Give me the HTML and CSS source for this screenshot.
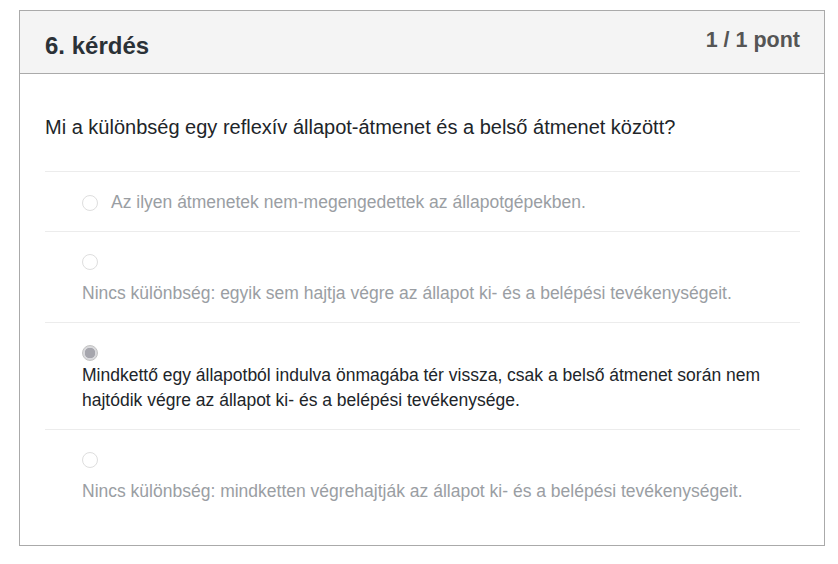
FILE: index.html
```html
<!DOCTYPE html>
<html lang="hu">
<head>
<meta charset="utf-8">
<link rel="stylesheet" href="styles.css">
</head>
<body>
<div class="card">
  <div class="card-header">
    <h2 class="title">6. kérdés</h2>
    <div class="points">1 / 1 pont</div>
  </div>
  <div class="card-body">
    <p class="question">Mi a különbség egy reflexív állapot-átmenet és a belső átmenet között?</p>
    <ul class="options">
      <li class="option inline">
        <span class="radio"></span>
        <span class="label">Az ilyen átmenetek nem-megengedettek az állapotgépekben.</span>
      </li>
      <li class="option">
        <span class="radio"></span>
        <div class="label">Nincs különbség: egyik sem hajtja végre az állapot ki- és a belépési tevékenységeit.</div>
      </li>
      <li class="option selected">
        <span class="radio checked"></span>
        <div class="label">Mindkettő egy állapotból indulva önmagába tér vissza, csak a belső átmenet során nem hajtódik végre az állapot ki- és a belépési tevékenysége.</div>
      </li>
      <li class="option">
        <span class="radio"></span>
        <div class="label">Nincs különbség: mindketten végrehajtják az állapot ki- és a belépési tevékenységeit.</div>
      </li>
    </ul>
  </div>
</div>
</body>
</html>
```

FILE: styles.css
```css
* { box-sizing: border-box; }
body {
  margin: 0;
  background: #fff;
  font-family: "Liberation Sans", Arial, sans-serif;
  color: #333;
}
.card {
  margin: 10px 0 0 19px;
  width: 806px;
  height: 536px;
  border: 1px solid #aaa;
}
.card-header {
  height: 63px;
  background: #f4f4f4;
  border-bottom: 1px solid #aaa;
  display: flex;
  justify-content: space-between;
  align-items: flex-start;
  padding: 0 24px 0 25px;
}
.title {
  margin: 21px 0 0;
  font-size: 24px;
  font-weight: bold;
  line-height: 28px;
  color: #2b3137;
}
.points {
  margin-top: 16px;
  font-size: 21.5px;
  font-weight: bold;
  line-height: 26px;
  color: #555;
}
.card-body {
  padding: 0 24px 0 25px;
}
.question {
  margin: 39px 0 30px;
  font-size: 20px;
  line-height: 28px;
  color: #212529;
}
.options {
  list-style: none;
  margin: 0;
  padding: 0;
}
.option {
  border-top: 1px solid #ececec;
  padding: 20px 0 16px 37px;
  font-size: 17.5px;
  line-height: 25px;
  color: #9a9ea3;
}
.option .radio {
  display: block;
  margin: 2px 0 11px;
}
.option.selected .radio {
  margin-bottom: 2px;
}
.option.selected {
  color: #212529;
}
.option.inline {
  display: flex;
  align-items: center;
  gap: 13px;
  padding-top: 18px;
}
.option.inline .radio {
  margin: 0;
}
.radio {
  width: 16px;
  height: 16px;
  border-radius: 50%;
  border: 1px solid #dedede;
  background: #fff;
  flex: none;
}
.radio.checked {
  border-color: #c4c4c4;
  background: radial-gradient(circle, #a6a6ad 0 5px, #d9d9dc 5.5px);
}
```
